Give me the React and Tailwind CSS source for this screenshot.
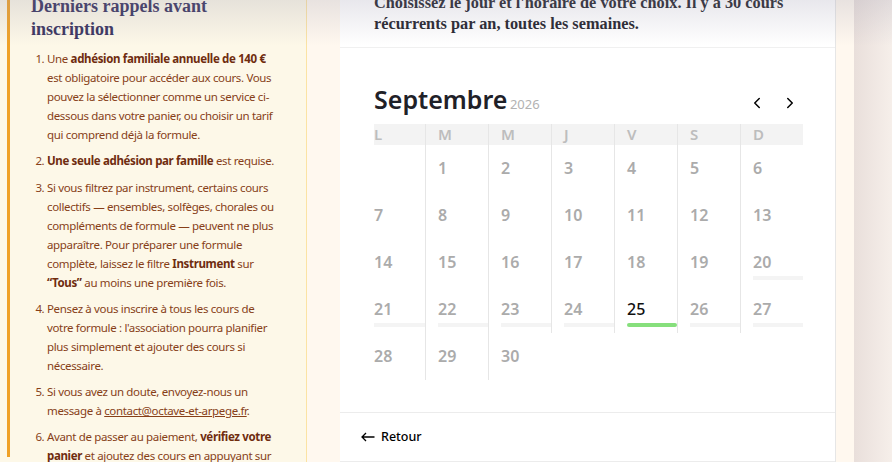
import React from 'react';
import { ChevronLeft, ChevronRight } from 'lucide-react';

const days = ['L', 'M', 'M', 'J', 'V', 'S', 'D'];

// septembre 2026 commence un mardi
const cells = [null, ...Array.from({ length: 30 }, (_, i) => i + 1)];
const withSessions = [20, 21, 22, 23, 24, 25, 26, 27];
const selected = 25;

const Reminders = () => (
  <aside className="w-[307px] shrink-0 bg-[#fdf8e8] border-r border-[#fbe3a4] pl-[7px]">
    <div className="h-full border-l-[3px] border-[#efa128] pl-[21px] pr-[18px]">
      <h2
        className="-mt-[5px] text-[18px] leading-[23px] font-bold text-[#39335f]"
        style={{ fontFamily: '"Liberation Serif", "DejaVu Serif", serif' }}
      >
        Derniers rappels avant inscription
      </h2>
      <ol
        className="mt-[8px] list-decimal pl-[16px] text-[11.5px] leading-[19px] tracking-[-0.35px] text-[#873f18] flex flex-col gap-[7.3px]"
        style={{ fontFamily: '"Noto Sans", "Open Sans", sans-serif' }}
      >
        <li>
          Une <strong className="font-bold text-[#6f2c0f]">adhésion familiale annuelle de 140 €</strong>
          <br />
          est obligatoire pour accéder aux cours. Vous pouvez la sélectionner comme un service ci-dessous dans votre
          panier, ou choisir un tarif qui comprend déjà la formule.
        </li>
        <li>
          <strong className="font-bold text-[#6f2c0f]">Une seule adhésion par famille</strong> est requise.
        </li>
        <li>
          Si vous filtrez par instrument, certains cours collectifs — ensembles, solfèges, chorales ou compléments
          de formule — peuvent ne plus apparaître. Pour préparer une formule complète, laissez le filtre{' '}
          <strong className="font-bold text-[#6f2c0f]">Instrument</strong> sur{' '}
          <strong className="font-bold text-[#6f2c0f]">“Tous”</strong> au moins une première fois.
        </li>
        <li>
          Pensez à vous inscrire à tous les cours de
          <br />
          votre formule : l'association pourra planifier plus simplement et ajouter des cours si nécessaire.
        </li>
        <li>
          Si vous avez un doute, envoyez-nous un message à{' '}
          <a href="#" className="underline">contact@octave-et-arpege.fr</a>.
        </li>
        <li>
          Avant de passer au paiement, <strong className="font-bold text-[#6f2c0f]">vérifiez votre panier</strong> et
          ajoutez des cours en appuyant sur
        </li>
      </ol>
    </div>
  </aside>
);

const Calendar = () => (
  <div className="pl-[34px] pr-[33px] pt-[34px]" style={{ fontFamily: '"Noto Sans", "Open Sans", sans-serif' }}>
    <div className="flex items-center">
      <h3 className="text-[25px] leading-[34px] font-semibold text-[#1f2128]">
        Septembre <span className="text-[13px] font-normal text-[#b2b2b2] -ml-[4px]">2026</span>
      </h3>
      <div className="ml-auto flex items-center gap-[9px] pt-[2px]">
        <button className="w-6 h-6 flex items-center justify-center text-black">
          <ChevronLeft size={18} strokeWidth={2} />
        </button>
        <button className="w-6 h-6 flex items-center justify-center text-black">
          <ChevronRight size={18} strokeWidth={2} />
        </button>
      </div>
    </div>

    <div className="mt-[3px] grid grid-cols-[51px_repeat(6,63px)]">
      {days.map((d, i) => (
        <div
          key={i}
          className={`h-[21px] bg-[#f3f3f3] text-[15px] leading-[21px] font-semibold text-[#bdbdbd] ${
            i === 0 ? '' : 'border-l border-[#e6e6e6] pl-[12px]'
          }`}
        >
          {d}
        </div>
      ))}
      {cells.map((n, i) => {
        const first = i % 7 === 0;
        const hasBar = n && withSessions.includes(n);
        const isSel = n === selected;
        return (
          <div
            key={i}
            className={`h-[47px] flex flex-col ${first ? '' : 'border-l border-[#e6e6e6] pl-[12px]'}`}
          >
            {n && (
              <span
                className={`mt-[11px] text-[16px] leading-[24px] ${
                  isSel ? 'font-medium text-[#111]' : 'font-semibold text-[#ababab]'
                }`}
              >
                {n}
              </span>
            )}
            {hasBar && (
              <span
                className={`mt-auto mb-[6px] h-[4px] ${isSel ? 'bg-[#86df7c] rounded-[2px]' : 'bg-[#f4f4f4]'}`}
              />
            )}
          </div>
        );
      })}
    </div>
  </div>
);

export default function App() {
  return (
    <div className="relative flex h-[462px] w-[892px] overflow-hidden bg-[#fff8ef]">
      <Reminders />

      <div className="w-[33px] shrink-0" />

      <main className="w-[496px] shrink-0 bg-white border-r border-[#e6e6e6] flex flex-col">
        <div className="border-b border-[#f0f0f0] pl-[34px] pr-[28px] pb-[13px]">
          <p
            className="-mt-[8px] text-[16.3px] leading-[21px] font-bold text-[#24232c]"
            style={{ fontFamily: '"Liberation Serif", "DejaVu Serif", serif' }}
          >
            Choisissez le jour et l'horaire de votre choix. Il y a 30 cours récurrents par an, toutes les semaines.
          </p>
        </div>

        <Calendar />

        <div className="mt-auto border-t border-b border-[#ececec] h-[50px] flex items-center pl-[21px]">
          <button
            className="flex items-center gap-[6px] text-[12.5px] font-medium text-black"
            style={{ fontFamily: '"Noto Sans", "Open Sans", sans-serif' }}
          >
            <svg width="14" height="10" viewBox="0 0 14 10" fill="none" stroke="currentColor" strokeWidth="1.3">
              <path d="M13.5 5H1M5 1 1 5l4 4" />
            </svg>
            Retour
          </button>
        </div>
      </main>

      <div className="w-[18px] shrink-0" />
      <div className="flex-1 bg-linear-to-r from-[#e9dfdb] to-[#f6efea]" />

      {/* ombre de l'en-tête collant */}
      <div className="pointer-events-none absolute inset-x-0 top-0 h-[46px] bg-linear-to-b from-[rgba(150,148,170,0.22)] to-transparent" />
    </div>
  );
}
